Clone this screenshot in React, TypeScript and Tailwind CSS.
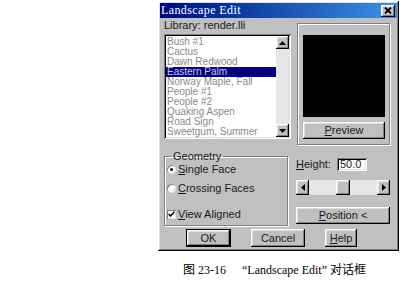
const raised =
  "bg-[#c0c0c0] shadow-[inset_-1px_-1px_#000,inset_1px_1px_#fff,inset_-2px_-2px_#808080,inset_2px_2px_#dfdfdf]";
const sunken =
  "shadow-[inset_1px_1px_#808080,inset_-1px_-1px_#fff,inset_2px_2px_#000,inset_-2px_-2px_#dfdfdf]";

const items = [
  "Bush #1",
  "Cactus",
  "Dawn Redwood",
  "Eastern Palm",
  "Norway Maple, Fall",
  "People #1",
  "People #2",
  "Quaking Aspen",
  "Road Sign",
  "Sweetgum, Summer",
];

function Arrow({ dir }: { dir: "up" | "down" | "left" | "right" }) {
  const pts = {
    up: "0,4 7,4 3.5,0",
    down: "0,0 7,0 3.5,4",
    left: "4,0 4,7 0,3.5",
    right: "0,0 0,7 4,3.5",
  }[dir];
  const w = dir === "up" || dir === "down" ? 7 : 4;
  const h = dir === "up" || dir === "down" ? 4 : 7;
  return (
    <svg width={w} height={h} viewBox={`0 0 ${w} ${h}`}>
      <polygon points={pts} fill="#000" />
    </svg>
  );
}

function Btn({
  children,
  className = "",
}: {
  children: React.ReactNode;
  className?: string;
}) {
  return (
    <div className={`${raised} flex items-center justify-center ${className}`}>
      {children}
    </div>
  );
}

export default function App() {
  return (
    <div className="w-[403px] h-[285px] bg-white overflow-hidden">
      <div
        className={`ml-[158px] mt-[1px] w-[241px] h-[250px] flex flex-col p-[2px] font-['Liberation_Sans',sans-serif] text-[11px] text-[#1a1a1a] ${raised}`}
      >
        {/* title bar */}
        <div className="h-[15px] flex items-center justify-between pl-[1px] pr-[2px] bg-linear-to-r from-[#000080] via-[#1a4fb0] to-[#3d93e8]">
          <span className="text-white font-['Liberation_Serif',serif] text-[12px] tracking-[0.4px] leading-[15px]">
            Landscape Edit
          </span>
          <div className={`${raised} w-[14px] h-[12px] flex items-center justify-center`}>
            <svg width="8" height="7" viewBox="0 0 8 7">
              <path d="M1 0.5 L7 6.5 M7 0.5 L1 6.5" stroke="#000" strokeWidth="1.8" />
            </svg>
          </div>
        </div>

        <div className="flex items-start">
          {/* left column */}
          <div className="ml-[4px] mt-[2px] w-[127px] flex flex-col">
            <div className="h-[10px] leading-[10px]">Library: render.lli</div>
            <div className={`mt-[4px] h-[105px] bg-white flex p-[2px] ${sunken}`}>
              <div className="flex-1 pt-[1px] text-[10px]">
                {items.map((it) => (
                  <div
                    key={it}
                    className={`h-[10px] leading-[10px] pl-[1px] whitespace-nowrap ${
                      it === "Eastern Palm"
                        ? "bg-[#000080] text-[#c8c8e0]"
                        : "text-[#8a8a8a]"
                    }`}
                  >
                    {it}
                  </div>
                ))}
              </div>
              <div className="w-[13px] flex flex-col bg-[#e6e6e6]">
                <Btn className="h-[13px]">
                  <Arrow dir="up" />
                </Btn>
                <div className="flex-1" />
                <Btn className="h-[13px]">
                  <Arrow dir="down" />
                </Btn>
              </div>
            </div>
            <fieldset className="mt-[12px] h-[75px] w-[124px] border border-[#808080] shadow-[inset_1px_1px_#fff,1px_1px_#fff]">
              <legend className="ml-[6px] px-[2px] leading-[10px]">Geometry</legend>
              <div className="mt-[2px] h-[12px] flex items-center ml-[2px]">
                <div className="w-[9px] h-[9px] rounded-full bg-white shadow-[inset_1px_1px_#808080,inset_-1px_-1px_#dfdfdf] flex items-center justify-center">
                  <div className="w-[3px] h-[3px] rounded-full bg-black" />
                </div>
                <span className="ml-[2px]">
                  <span className="underline">S</span>ingle Face
                </span>
              </div>
              <div className="mt-[7px] h-[12px] flex items-center ml-[2px]">
                <div className="w-[9px] h-[9px] rounded-full bg-white shadow-[inset_1px_1px_#808080,inset_-1px_-1px_#dfdfdf]" />
                <span className="ml-[2px]">
                  <span className="underline">C</span>rossing Faces
                </span>
              </div>
              <div className="mt-[14px] h-[12px] flex items-center ml-[2px]">
                <div className="w-[9px] h-[9px] bg-white shadow-[inset_1px_1px_#808080,inset_-1px_-1px_#dfdfdf] flex items-center justify-center">
                  <svg width="7" height="6" viewBox="0 0 7 6">
                    <path d="M0.5 3 L2.5 5 L6.5 0.8" stroke="#000" strokeWidth="1.5" fill="none" />
                  </svg>
                </div>
                <span className="ml-[2px]">
                  <span className="underline">V</span>iew Aligned
                </span>
              </div>
            </fieldset>
          </div>

          {/* right column */}
          <div className="ml-[5px] mt-[5px] w-[94px] flex flex-col">
            <div className="ml-[1px] w-[93px] h-[122px] border border-[#808080] shadow-[inset_1px_1px_#fff,1px_1px_#fff] pl-[5px] pt-[11px]">
              <div className="w-[82px] h-[82px] bg-black" />
              <Btn className="mt-[5px] w-[82px] h-[17px]">
                <span>
                  <span className="underline">P</span>review
                </span>
              </Btn>
            </div>
            <div className="mt-[13px] h-[13px] flex items-center">
              <span className="w-[41px] leading-[13px]">
                <span className="underline">H</span>eight:
              </span>
              <div className={`w-[30px] h-[13px] bg-white pl-[3px] leading-[13px] ${sunken}`}>
                50.0
              </div>
            </div>
            <div className="mt-[9px] h-[15px] flex bg-[#e6e6e6]">
              <Btn className="w-[13px] h-[15px]">
                <Arrow dir="left" />
              </Btn>
              <div className="w-[27px]" />
              <Btn className="w-[14px] h-[15px]">{null}</Btn>
              <div className="flex-1" />
              <Btn className="w-[13px] h-[15px]">
                <Arrow dir="right" />
              </Btn>
            </div>
            <Btn className="mt-[12px] h-[17px]">
              <span>
                <span className="underline">P</span>osition &lt;
              </span>
            </Btn>
          </div>
        </div>

        {/* bottom buttons */}
        <div className="mt-[3px] flex">
          <div className="ml-[26px] w-[45px] h-[18px] border border-black">
            <Btn className="w-full h-full">OK</Btn>
          </div>
          <Btn className="ml-[20px] w-[54px] h-[18px]">Cancel</Btn>
          <Btn className="ml-[20px] w-[32px] h-[18px]">
            <span>
              <span className="underline">H</span>elp
            </span>
          </Btn>
        </div>
      </div>

      <div className="mt-[12px] pl-[183px] h-[14px] leading-[14px] text-[12px] text-black font-['Liberation_Serif','Noto_Sans_CJK_SC',serif] whitespace-nowrap">
        图 23-16<span className="inline-block w-[16px]" />“Landscape Edit” 对话框
      </div>
    </div>
  );
}
